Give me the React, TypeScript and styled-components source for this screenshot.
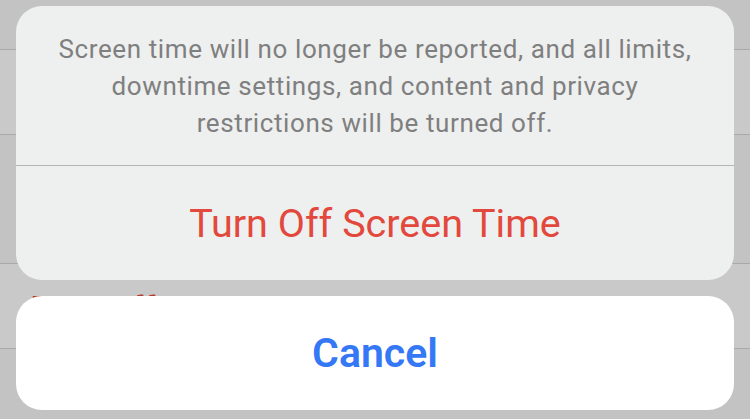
import React from "react";
import styled, { createGlobalStyle } from "styled-components";

const GlobalStyle = createGlobalStyle`
  html, body {
    margin: 0;
    padding: 0;
    background: #c3c3c3;
  }
  body {
    font-family: Roboto, "Liberation Sans", Arial, sans-serif;
    -webkit-font-smoothing: antialiased;
  }
`;

const Screen = styled.div`
  position: relative;
  width: 750px;
  height: 419px;
  overflow: hidden;
  background: #c3c3c3;
`;

// dimmed settings list behind the sheet
const List = styled.div`
  display: flex;
  flex-direction: column;
`;

const Spacer = styled.div<{ $h: number }>`
  height: ${(p) => p.$h}px;
`;

const Cell = styled.div`
  height: 86px;
  box-sizing: border-box;
  display: flex;
  align-items: center;
  padding: 4px 0 0 32px;
  background: #c9c9c9;
  border-top: 1px solid #a9a9a9;
  border-bottom: 1px solid #a9a9a9;
  font-size: 34px;
  color: #b53b30;
`;

const Sheet = styled.div`
  position: absolute;
  top: 6px;
  left: 16px;
  right: 16px;
  display: flex;
  flex-direction: column;
  gap: 16px;
`;

const Group = styled.div<{ $white?: boolean }>`
  display: flex;
  flex-direction: column;
  border-radius: 26px;
  overflow: hidden;
  background: ${(p) => (p.$white ? "#ffffff" : "#eeefef")};
`;

const Message = styled.div`
  height: 160px;
  box-sizing: border-box;
  padding-top: 25px;
  text-align: center;
  font-size: 26px;
  letter-spacing: 0.6px;
  line-height: 37px;
  color: #7f7f7f;
  border-bottom: 1px solid #b4b4b4;
`;

const Action = styled.div<{ $tone: "red" | "blue" }>`
  height: 114px;
  display: flex;
  align-items: center;
  justify-content: center;
  font-size: ${(p) => (p.$tone === "blue" ? 41 : 39.5)}px;
  font-weight: ${(p) => (p.$tone === "blue" ? 600 : 400)};
  color: ${(p) => (p.$tone === "blue" ? "#3478f6" : "#e2483c")};
`;

export default function App() {
  return (
    <>
      <GlobalStyle />
      <Screen>
        <List>
          <Spacer $h={49} />
          <Cell />
          <Spacer $h={128} />
          <Cell>Turn Off Screen Time</Cell>
        </List>
        <Sheet>
          <Group>
            <Message>
              Screen time will no longer be reported, and all limits,
              <br />
              downtime settings, and content and privacy
              <br />
              restrictions will be turned off.
            </Message>
            <Action $tone="red">Turn Off Screen Time</Action>
          </Group>
          <Group $white>
            <Action $tone="blue">Cancel</Action>
          </Group>
        </Sheet>
      </Screen>
    </>
  );
}
